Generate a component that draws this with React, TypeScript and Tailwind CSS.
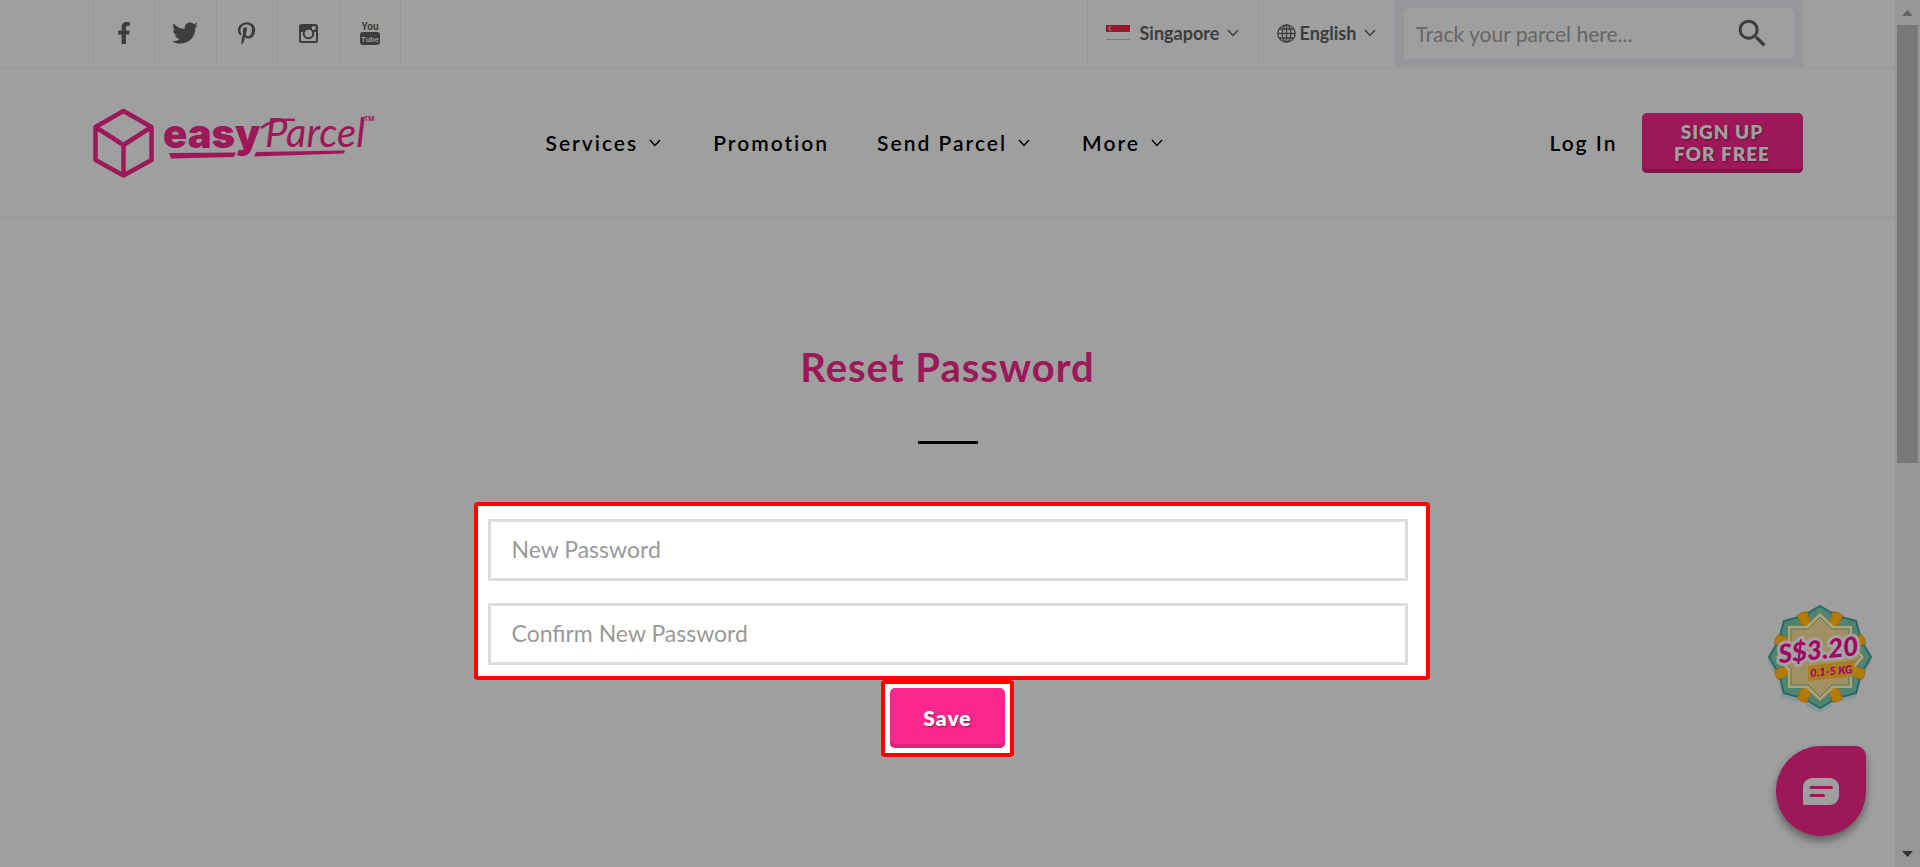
import type { ReactNode } from "react";
import { FaFacebookF, FaPinterestP, FaTwitter } from "react-icons/fa";
import { MdSearch } from "react-icons/md";

const NAV_ITEMS = [
  { label: "Services", hasMenu: true },
  { label: "Promotion", hasMenu: false },
  { label: "Send Parcel", hasMenu: true },
  { label: "More", hasMenu: true },
];

const PASSWORD_FIELDS = ["New Password", "Confirm New Password"];

const DIAGONALS = [22.5, 67.5, 112.5, 157.5, 202.5, 247.5, 292.5, 337.5];
const PETALS = [0, 45, 90, 135, 180, 225, 270, 315];

function Chevron({ className }: { className: string }) {
  return (
    <svg
      aria-hidden="true"
      className={className}
      fill="none"
      stroke="currentColor"
      strokeWidth="1.5"
      viewBox="0 0 12 8"
    >
      <path d="M1 1l5 5.5L11 1" />
    </svg>
  );
}

function InstagramIcon() {
  return (
    <svg aria-hidden="true" className="size-[19px]" viewBox="0 0 19 19">
      <path
        d="M2.5 0h14A2.5 2.5 0 0 1 19 2.5v14a2.5 2.5 0 0 1-2.5 2.5h-14A2.5 2.5 0 0 1 0 16.5v-14A2.5 2.5 0 0 1 2.5 0zM2 8v8.2c0 .5.3.8.8.8h13.4c.5 0 .8-.3.8-.8V8h-1.900a5.800 5.800 0 1 1-11.200 0zM13.600 2.200c-.4 0-.7.300-.7.700v2.200c0 .4.300.7.700.7h2.400c.4 0 .7-.3.700-.7V2.900c0-.4-.3-.7-.7-.7zM9.500 5.700a3.800 3.800 0 1 0 0 7.600 3.800 3.800 0 0 0 0-7.600z"
        fill="currentColor"
        fillRule="evenodd"
      />
    </svg>
  );
}

function YoutubeIcon() {
  return (
    <svg aria-hidden="true" className="h-[23px] w-5" viewBox="0 0 20 23">
      <rect fill="#3d3d3d" height="13" rx="3" width="20" x="0" y="10" />
      <g
        fontFamily="Roboto, sans-serif"
        fontSize="10"
        fontWeight="700"
        textAnchor="middle"
      >
        <text fill="#3d3d3d" x="10" y="8">
          You
        </text>
        <text fill="#9f9f9f" fontSize="8" fontWeight="500" x="10" y="20">
          Tube
        </text>
      </g>
    </svg>
  );
}

function GlobeIcon() {
  return (
    <svg
      aria-hidden="true"
      className="size-[19px]"
      fill="none"
      stroke="currentColor"
      strokeWidth="1.3"
      viewBox="0 0 19 19"
    >
      <circle cx="9.5" cy="9.5" r="8.7" />
      <ellipse cx="9.5" cy="9.5" rx="4.3" ry="8.7" />
      <path d="M9.5 1v17M1 9.5h17M2.2 5h14.6M2.2 14h14.6" />
    </svg>
  );
}

function SingaporeFlag() {
  return (
    <svg aria-hidden="true" className="h-4 w-6" viewBox="0 0 24 16">
      <rect fill="#a1a0a0" height="15" width="24" />
      <rect fill="#96182a" height="7" width="24" />
      <circle cx="5" cy="3.5" fill="#b06a74" r="2.6" />
      <circle cx="6" cy="3.5" fill="#96182a" r="2.2" />
      <rect fill="#7c7c7c" height="1" width="24" y="14" />
    </svg>
  );
}

const SOCIAL_LINKS: { name: string; icon: ReactNode }[] = [
  { name: "Facebook", icon: <FaFacebookF size={22} /> },
  { name: "Twitter", icon: <FaTwitter size={26} /> },
  { name: "Pinterest", icon: <FaPinterestP size={23} /> },
  { name: "Instagram", icon: <InstagramIcon /> },
  { name: "YouTube", icon: <YoutubeIcon /> },
];

function Logo() {
  return (
    <a aria-label="easyParcel" className="block" href="#home">
      <svg className="h-[70px] w-[282px]" viewBox="0 0 282 70">
        <g
          fill="none"
          stroke="#9c1858"
          strokeLinejoin="round"
          strokeWidth="4.5"
        >
          <path d="M30.5 3L58.5 19v33L30.5 67.5 2.5 52V19z" />
          <path d="M2.5 19L30.5 37 58.5 19M30.5 37v30" />
        </g>
        <g fill="#9c1858">
          <text
            fontFamily="Inter, sans-serif"
            fontSize="40"
            fontWeight="900"
            x="70"
            y="40"
          >
            easy
          </text>
          <text
            fontFamily="Lato, sans-serif"
            fontSize="40"
            fontStyle="italic"
            x="172"
            y="39"
          >
            Parcel
          </text>
          <text
            fontFamily="Roboto, sans-serif"
            fontSize="7"
            fontWeight="700"
            x="271"
            y="13"
          >
            TM
          </text>
          <path d="M76 45l67-.5-2 4.5-63 1.500zM163 44l89-1.500-1 3-90 3z" />
        </g>
        <path
          d="M168 20c8-7 21-9 34-8"
          fill="none"
          stroke="#9c1858"
          strokeWidth="2.5"
        />
      </svg>
    </a>
  );
}

function TopBar() {
  return (
    <div className="h-[68px] border-[#979797] border-b">
      <div className="mx-auto flex h-[66px] max-w-[1710px] justify-between">
        <div className="flex w-[309px] border-[#979797] border-l">
          {SOCIAL_LINKS.map((link) => (
            <a
              aria-label={link.name}
              className="flex flex-1 items-center justify-center border-[#979797] border-r"
              href="#social"
              key={link.name}
            >
              {link.icon}
            </a>
          ))}
        </div>

        <div className="flex font-bold text-[18px]">
          <button
            className="flex w-[171px] items-center border-[#979797] border-l pl-[18px]"
            type="button"
          >
            <SingaporeFlag />
            <span className="ml-[10px]">Singapore</span>
            <Chevron className="ml-2 h-2 w-3" />
          </button>
          <button
            className="flex w-[137px] items-center border-[#979797] border-l pl-[18px]"
            type="button"
          >
            <GlobeIcon />
            <span className="ml-1">English</span>
            <Chevron className="ml-2 h-2 w-3" />
          </button>
          <form className="w-[408px] bg-[#97979b] px-[9px] pt-2 pb-[7px]">
            <div className="flex h-full items-center rounded-[5px] bg-[#9f9f9f] pr-[23px] pl-3">
              <input
                aria-label="Track your parcel"
                className="min-w-0 flex-1 bg-transparent font-normal text-[21px] outline-none placeholder:text-[#666666]"
                placeholder="Track your parcel here..."
                type="text"
              />
              <button aria-label="Search" type="submit">
                <MdSearch size={37} />
              </button>
            </div>
          </form>
        </div>
      </div>
    </div>
  );
}

function Header() {
  return (
    <header className="border-[#979797] border-b">
      <div className="mx-auto flex h-[149px] max-w-[1710px] items-center">
        <Logo />
        <nav className="ml-[171px] flex flex-1 font-semibold text-[21px] text-black tracking-[2px]">
          {NAV_ITEMS.map((item) => (
            <a
              className="mr-12 flex items-center"
              href="#menu"
              key={item.label}
            >
              {item.label}
              {item.hasMenu && <Chevron className="mr-1 ml-[11px] h-2 w-3" />}
            </a>
          ))}
        </nav>
        <a
          className="font-semibold text-[21px] text-black tracking-[2px]"
          href="#login"
        >
          Log In
        </a>
        <button
          className="ml-6 h-[60px] w-[161px] rounded-[5px] bg-[#9c1858] font-extrabold text-[#9f9f9f] text-[19px] leading-[22px] tracking-[1px] shadow-[inset_0_-4px_0_#821349] [text-shadow:1px_1px_2px_rgb(0_0_0/0.4)]"
          type="button"
        >
          SIGN UP
          <br />
          FOR FREE
        </button>
      </div>
    </header>
  );
}

function ResetPasswordForm() {
  return (
    <form className="mx-auto mt-[58px] flex max-w-[920px] flex-col items-center">
      {/* Highlighted step: the two password inputs */}
      <div className="-ml-[14px] -mr-[22px] flex flex-col gap-[22px] self-stretch rounded-[4px] border-4 border-[#ff0000] bg-white pt-[13px] pr-[18px] pb-[11px] pl-[10px]">
        {PASSWORD_FIELDS.map((label) => (
          <input
            aria-label={label}
            className="h-[62px] w-full border-[#dddddd] border-[3px] bg-white px-[21px] pb-[2px] text-[23px] outline-none placeholder:text-[#999999]"
            key={label}
            placeholder={label}
            type="password"
          />
        ))}
      </div>

      {/* Highlighted step: save */}
      <div className="rounded-[4px] border-4 border-[#ff0000] bg-white px-[5px] pt-1 pb-[5px]">
        <button
          className="h-[60px] w-[115px] rounded-[5px] bg-[#fc278e] font-extrabold text-[21px] text-white tracking-[1px] shadow-[inset_0_-4px_0_#d92279] [text-shadow:1px_1px_2px_rgb(0_0_0/0.4)]"
          type="button"
        >
          Save
        </button>
      </div>
    </form>
  );
}

function PriceBadge() {
  return (
    <svg
      aria-label="S$3.20 for 0.1-5 KG"
      className="h-[110px] w-[107px]"
      role="img"
      viewBox="-53 -53 107 110"
    >
      {/* Drop shadow */}
      <g fill="#83999a">
        {PETALS.map((angle) => (
          <path
            d="M0-52L13-45V-28H-13V-45z"
            key={angle}
            transform={`translate(-1 4) rotate(${angle})`}
          />
        ))}
      </g>
      <g fill="#518470" stroke="#28686a" strokeWidth="2">
        {PETALS.map((angle) => (
          <path
            d="M0-51L12-44V-31L0-22-12-31V-44z"
            key={angle}
            transform={`rotate(${angle})`}
          />
        ))}
      </g>
      <g fill="#b07c0c" stroke="#a8690f">
        {DIAGONALS.map((angle) => (
          <path
            d="M-5-38L-5-47 0-48 5-47 5-38 0-30z"
            key={angle}
            transform={`rotate(${angle})`}
          />
        ))}
      </g>
      <path
        d="M0-44L14-31H32V-14L44 0 32 14V31H14L0 44-14 31H-32V14L-44 0-32-14V-31H-14z"
        fill="#b3a271"
      />
      <path
        d="M0-40L12-28H29V-12L40 0 29 12V28H12L0 40-12 28H-29V12L-40 0-29-12V-28H-12z"
        fill="#a39062"
        stroke="#4a7768"
      />
      <path d="M-12 9L35 3 34 19-12 24z" fill="#ab7d20" />
      <g
        fill="#a3005f"
        fontFamily="Lato, sans-serif"
        fontStyle="italic"
        fontWeight="900"
        textAnchor="middle"
      >
        <text
          fontSize="26"
          paintOrder="stroke"
          stroke="#a5a2a5"
          strokeLinejoin="round"
          strokeWidth="6"
          transform="rotate(-6)"
          x="-1"
          y="2"
        >
          S$3.20
        </text>
        <text fontSize="11" transform="rotate(-5)" x="10" y="19">
          0.1-5 KG
        </text>
      </g>
    </svg>
  );
}

function FloatingWidgets() {
  return (
    <aside className="absolute right-[21px] bottom-[31px] flex flex-col items-center gap-8">
      <PriceBadge />
      <button
        aria-label="Open chat"
        className="flex size-[90px] items-center justify-center rounded-[45px] rounded-tr-[10px] bg-[#9c1858] shadow-[0_5px_8px_rgb(0_0_0/0.4)]"
        type="button"
      >
        <svg aria-hidden="true" className="h-[27px] w-9" viewBox="0 0 36 27">
          <path
            d="M9 0h18a9 9 0 0 1 9 9v9a9 9 0 0 1-9 9H1.5A1.5 1.5 0 0 1 0 25.5V9a9 9 0 0 1 9-9z"
            fill="#9f9f9f"
          />
          <path
            d="M8 9.5h20.500M8 17.500h12.500"
            stroke="#9c1858"
            strokeLinecap="round"
            strokeWidth="3"
          />
        </svg>
      </button>
    </aside>
  );
}

function Scrollbar() {
  return (
    <div
      aria-hidden="true"
      className="flex w-[25px] shrink-0 flex-col items-center justify-between bg-[#979797] py-[10px]"
    >
      <svg className="h-[6px] w-[11px]" viewBox="0 0 11 6">
        <path d="M0 6h11L5.5 0z" fill="#646464" />
      </svg>
      <div className="mt-[9px] mb-auto h-[438px] w-[21px] bg-[#787878]" />
      <svg className="h-[6px] w-[11px]" viewBox="0 0 11 6">
        <path d="M0 0h11L5.5 6z" fill="#323232" />
      </svg>
    </div>
  );
}

export default function App() {
  return (
    <div className="flex min-h-screen bg-[#9f9f9f] font-['Lato',sans-serif] text-[#3d3d3d]">
      <div className="relative min-w-0 flex-1">
        <TopBar />
        <Header />
        <main className="pt-[119px]">
          <h1 className="text-center font-bold text-[#9c1858] text-[40px] leading-[60px] tracking-[1px]">
            Reset Password
          </h1>
          <hr className="mx-auto mt-11 w-[60px] border-black border-t-[3px]" />
          <ResetPasswordForm />
        </main>
        <FloatingWidgets />
      </div>
      <Scrollbar />
    </div>
  );
}
